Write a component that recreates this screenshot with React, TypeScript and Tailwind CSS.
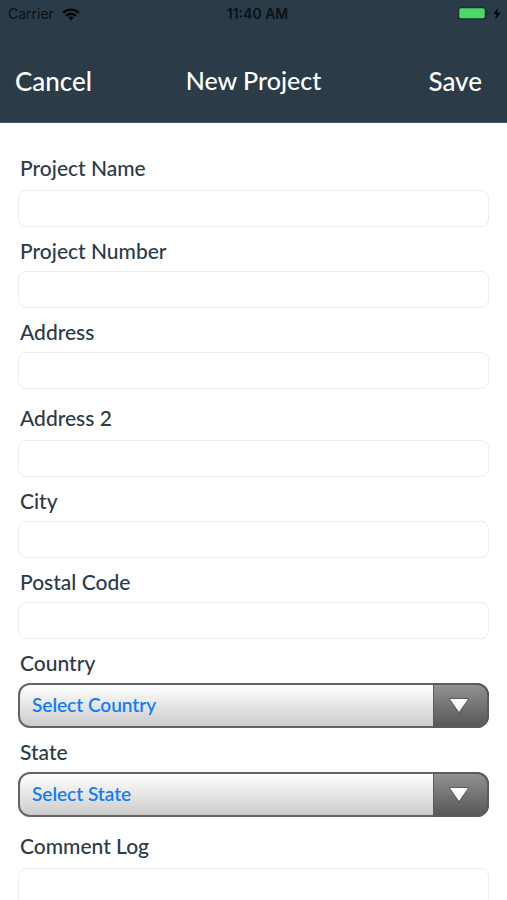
import React, { useState } from 'react';

interface FieldProps {
  id: string;
  label: string;
  lead?: boolean;
  children: React.ReactNode;
}

const inputClass =
  'block w-full h-[37px] px-3 rounded-lg border border-[#ececec] bg-white text-xl text-[#2b3b47] focus:outline-none focus:border-sky-400';

function Field({ id, label, lead, children }: FieldProps) {
  return (
    <div className={lead ? 'pt-[15px]' : 'pt-2.5'}>
      <label
        htmlFor={id}
        className={`block w-fit px-0.5 text-[21px] leading-7 font-medium text-[#2b3b47] ${lead ? 'mb-2' : 'mb-1.5'}`}
      >
        {label}
      </label>
      {children}
    </div>
  );
}

function TextField({ id, label, lead }: { id: string; label: string; lead?: boolean }) {
  return (
    <Field id={id} label={label} lead={lead}>
      <input id={id} type="text" className={inputClass} />
    </Field>
  );
}

function SelectField({ id, label, placeholder, options }: { id: string; label: string; placeholder: string; options: string[] }) {
  const [value, setValue] = useState('');

  return (
    <Field id={id} label={label}>
      <div className="relative">
        <select
          id={id}
          value={value}
          onChange={e => setValue(e.target.value)}
          className="block w-full h-[45px] pl-3 pr-16 rounded-xl border-2 border-[#646464] bg-linear-to-b from-white to-[#cccccc] appearance-none text-[19px] font-semibold text-[#137df5] focus:outline-none"
        >
          <option value="">{placeholder}</option>
          {options.map(option => (
            <option key={option} value={option}>{option}</option>
          ))}
        </select>
        <div className="absolute inset-y-0 right-0 w-14 pr-1 rounded-r-xl border-2 border-l border-[#5c5c5c] bg-linear-to-b from-[#929292] to-[#585858] flex items-center justify-center pointer-events-none">
          <svg className="w-6 h-5" viewBox="0 0 24 20">
            <path d="M1.5 2h21L12 18z" fill="#4a4a4a" opacity="0.6" />
            <path d="M3 3h18l-9 13z" fill="#fff" />
          </svg>
        </div>
      </div>
    </Field>
  );
}

function StatusBar() {
  return (
    <div className="grid grid-cols-3 items-center h-7 pl-2 pr-1 text-sm text-[#0b1116] font-[Inter,sans-serif]">
      <div className="flex items-center gap-2">
        <span>Carrier</span>
        <svg className="w-[18px] h-[13px]" viewBox="0 0 18 13" fill="none" stroke="#05080a" strokeWidth="2.3">
          <path d="M1.2 4.9a11 11 0 0 1 15.6 0" />
          <path d="M4 7.9a7.1 7.1 0 0 1 10 0" />
          <path d="M9 12.6 6.2 9.7a4 4 0 0 1 5.6 0z" fill="#05080a" stroke="none" />
        </svg>
      </div>
      <span className="pl-1 text-center font-semibold">11:40 AM</span>
      <svg className="justify-self-end w-[46px] h-4" viewBox="0 0 46 16">
        <rect x="1.5" y="1.5" width="27" height="11.5" rx="2.5" fill="#4cd964" stroke="#1f2f38" strokeWidth="1.5" />
        <path d="M30.5 5.5c1.4.6 1.4 3 0 3.6z" fill="#1b2830" />
        <path d="M41 1.5 36.5 8.2h3L38 13.8l6-7.4h-3.5z" fill="#05080a" />
      </svg>
    </div>
  );
}

export default function App() {
  return (
    <div className="flex flex-col h-screen bg-white font-[Lato,sans-serif]">
      <header className="shrink-0 bg-[#2b3b47] border-b border-[#4c5a64]">
        <StatusBar />
        <div className="grid grid-cols-[1fr_auto_1fr] items-center h-[94px] px-[15px] pt-3 font-medium text-white">
          <button type="button" className="justify-self-start text-[26px] cursor-pointer">Cancel</button>
          <h1 className="text-[25px]">New Project</h1>
          <button type="button" className="justify-self-end pr-2.5 text-[26px] cursor-pointer">Save</button>
        </div>
      </header>

      <main className="flex-1 min-h-0 overflow-y-auto [scrollbar-width:none]">
        <form className="px-[18px] pt-4 pb-6">
          <TextField id="project-name" label="Project Name" lead />
          <TextField id="project-number" label="Project Number" />
          <TextField id="address" label="Address" />
          <TextField id="address-2" label="Address 2" lead />
          <TextField id="city" label="City" />
          <TextField id="postal-code" label="Postal Code" />
          <SelectField id="country" label="Country" placeholder="Select Country" options={[]} />
          <SelectField id="state" label="State" placeholder="Select State" options={[]} />
          <Field id="comment-log" label="Comment Log" lead>
            <textarea
              id="comment-log"
              className="block w-full h-40 px-3 py-2 rounded-lg border border-[#ececec] bg-white text-xl text-[#2b3b47] resize-none focus:outline-none focus:border-sky-400"
            />
          </Field>
        </form>
      </main>
    </div>
  );
}
